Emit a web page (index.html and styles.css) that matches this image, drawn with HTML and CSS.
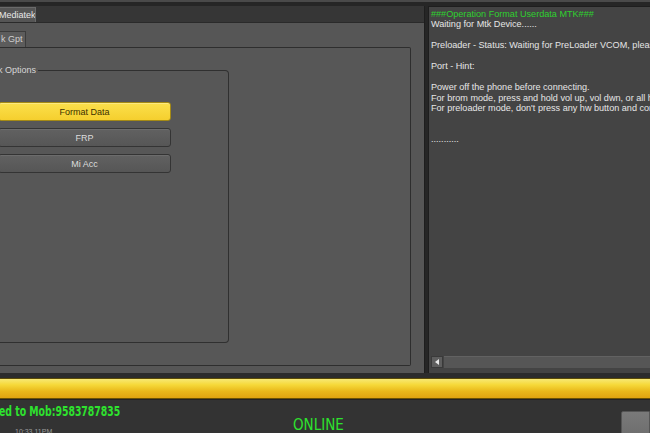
FILE: index.html
```html
<!DOCTYPE html>
<html lang="en">
  <head>
    <meta charset="UTF-8" />
    <meta name="viewport" content="width=device-width, initial-scale=1.0" />
    <title>Mtk Tool</title>
    <link rel="stylesheet" href="styles.css">
  </head>
  <body>
    <div class="main">
      <!-- 왼쪽 작업 영역 -->
      <section class="left">
        <div class="tab-bar">
          <div class="tab">Mediatek</div>
        </div>
        <div class="panel">
          <div class="sub-tab">k Gpt</div>
          <div class="page">
            <fieldset class="group">
              <legend>k Options</legend>
              <button class="btn btn-yellow">Format Data</button>
              <button class="btn">FRP</button>
              <button class="btn">Mi Acc</button>
            </fieldset>
          </div>
        </div>
      </section>

      <!-- 로그 -->
      <section class="log">
        <div class="log-text">
          <p class="green">###Operation Format Userdata MTK###</p>
          <p>Waiting for Mtk Device......</p>
          <p>&nbsp;</p>
          <p>Preloader - Status: Waiting for PreLoader VCOM, please connect mobile</p>
          <p>&nbsp;</p>
          <p>Port - Hint:</p>
          <p>&nbsp;</p>
          <p>Power off the phone before connecting.</p>
          <p>For brom mode, press and hold vol up, vol dwn, or all hw buttons and connect usb.</p>
          <p>For preloader mode, don't press any hw button and connect usb.</p>
          <p>&nbsp;</p>
          <p>&nbsp;</p>
          <p>...........</p>
        </div>
        <div class="hscroll">
          <div class="arrow"></div>
          <div class="track"></div>
        </div>
      </section>
    </div>

    <div class="progress"></div>

    <div class="status">
      <div class="status-left">
        <div class="mob">ed to Mob:9583787835</div>
        <div class="time">10:33 11PM</div>
      </div>
      <div class="online">ONLINE</div>
      <div class="status-btn"></div>
    </div>
  </body>
</html>
```

FILE: styles.css
```css
* {
  margin: 0;
  padding: 0;
  box-sizing: border-box;
}

body {
  width: 650px;
  height: 433px;
  overflow: hidden;
  background-color: #2c2c2c;
  font-family: "Liberation Sans", Tahoma, sans-serif;
  color: #e2e2e2;
}

.main {
  display: flex;
  height: 373px;
  padding-top: 4px;
  border-top: 2px solid #4a4a4a;
  background-color: #262626;
}

.left {
  width: 425px;
  display: flex;
  flex-direction: column;
  border-right: 1px solid #1e1e1e;
}

.tab-bar {
  height: 16px;
  background-color: #363636;
  display: flex;
  align-items: flex-end;
}

.tab {
  height: 15px;
  width: 38px;
  margin-left: -2px;
  font-size: 9px;
  line-height: 14px;
  color: #e8e8e8;
  background-color: #555;
  border: 1px solid #6a6a6a;
  border-bottom: none;
  white-space: nowrap;
  overflow: hidden;
}

.panel {
  flex: 1;
  background-color: #565656;
  border-top: 1px solid #2a2a2a;
  padding: 8px 13px 7px 0;
  display: flex;
  flex-direction: column;
}

.sub-tab {
  width: 26px;
  height: 16px;
  padding-left: 1px;
  font-size: 9px;
  line-height: 15px;
  color: #cfcfcf;
  background-color: #5c5c5c;
  border: 1px solid #3c3c3c;
  border-left: none;
  border-bottom: none;
  white-space: nowrap;
  overflow: hidden;
}

.page {
  flex: 1;
  border: 1px solid #2e2e2e;
  border-left: none;
  border-radius: 0 2px 2px 0;
  background-color: #575757;
  padding-top: 17px;
}

.group {
  width: 229px;
  height: 278px;
  border: 1px solid #303030;
  border-left: none;
  border-radius: 0 4px 4px 0;
  padding-top: 27px;
  display: flex;
  flex-direction: column;
  gap: 7px;
}

.group legend {
  font-size: 9px;
  color: #d6d6d6;
  margin-left: -2px;
  padding-right: 2px;
  white-space: nowrap;
}

.btn {
  height: 19px;
  width: 173px;
  margin-left: -2px;
  font-family: "Liberation Sans", Tahoma, sans-serif;
  font-size: 9px;
  color: #dcdcdc;
  background: linear-gradient(#616161, #565656);
  border: 1px solid #343434;
  border-radius: 3px;
  box-shadow: inset 0 1px 0 #6c6c6c;
}

.btn-yellow {
  color: #3a3000;
  background: linear-gradient(#fbe04c, #f5cf2e);
  border-color: #a58a14;
  box-shadow: inset 0 1px 0 #fdea80;
}

.log {
  flex: 1;
  margin-left: 3px;
  background-color: #444;
  border-left: 1px solid #1e1e1e;
  border-top: 1px solid #1e1e1e;
  display: flex;
  flex-direction: column;
  overflow: hidden;
}

.log-text {
  flex: 1;
  padding: 2px 0 0 2px;
  font-size: 9.1px;
  line-height: 10.45px;
  white-space: nowrap;
  color: #e6e6e6;
}

.green {
  color: #2fd02f;
}

.hscroll {
  height: 12px;
  margin-bottom: 5px;
  display: flex;
  gap: 1px;
  padding-left: 2px;
}

.arrow {
  width: 12px;
  background-color: #5e5e5e;
  position: relative;
  border: 1px solid #3a3a3a;
}

.arrow::after {
  content: "";
  position: absolute;
  left: 3px;
  top: 2px;
  border-style: solid;
  border-width: 3px 4px 3px 0;
  border-color: transparent #e8e8e8 transparent transparent;
}

.track {
  flex: 1;
  background-color: #565656;
  border-top: 1px solid #626262;
}

.progress {
  height: 21px;
  margin-top: 5px;
  border-top: 1px solid #5a4a08;
  border-bottom: 1px solid #6a5204;
  background: linear-gradient(#f7e874 0%, #f6d93a 30%, #e9b81a 65%, #dfa410 100%);
}

.status {
  height: 34px;
  background-color: #333;
  border-top: 1px solid #222;
  display: flex;
  position: relative;
}

.status-left {
  width: 293px;
  padding-top: 3px;
}

.mob {
  font-family: "DejaVu Sans Condensed", "DejaVu Sans", sans-serif;
  font-weight: bold;
  font-size: 14px;
  color: #2ee22e;
  margin-left: -1px;
  white-space: nowrap;
  transform: scaleX(0.74);
  transform-origin: left center;
}

.time {
  font-size: 7px;
  color: #9a9a9a;
  margin-top: 9px;
  margin-left: 15px;
}

.online {
  font-family: "DejaVu Sans Condensed", "DejaVu Sans", sans-serif;
  font-size: 15px;
  color: #2ee22e;
  padding-top: 16px;
}

.status-btn {
  position: absolute;
  right: 0;
  top: 11px;
  width: 29px;
  height: 30px;
  background: linear-gradient(#7a7a7a, #6c6c6c);
  border: 1px solid #555;
  border-radius: 2px 0 0 0;
}
```
